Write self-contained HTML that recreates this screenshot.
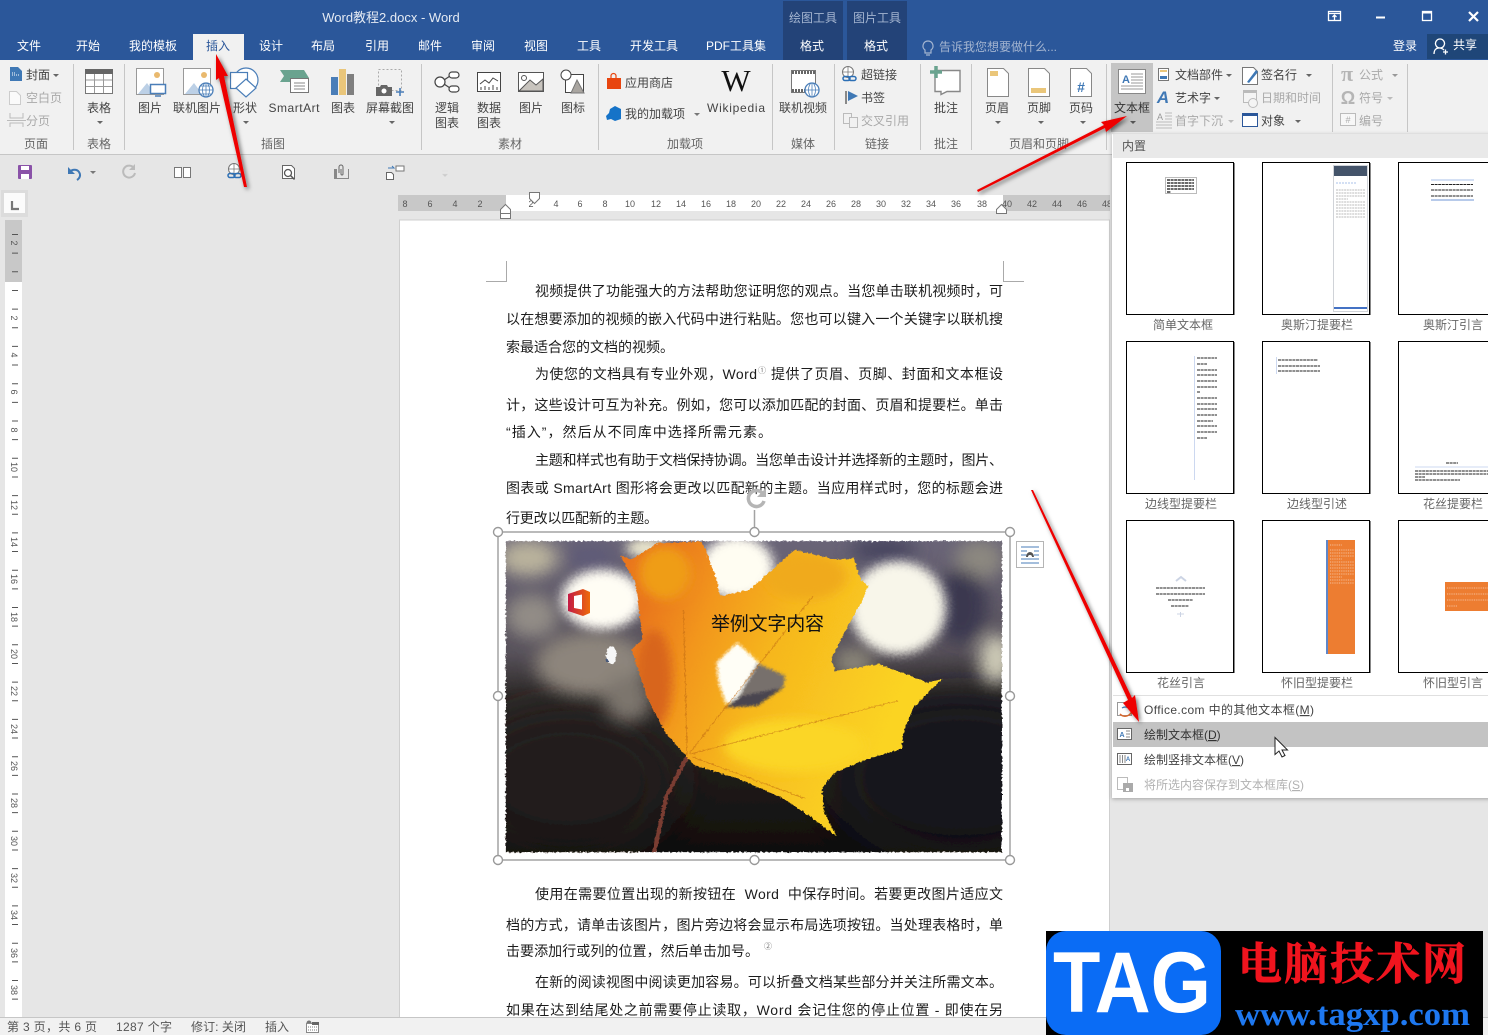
<!DOCTYPE html>
<html lang="zh-CN">
<head>
<meta charset="utf-8">
<title>Word教程2.docx - Word</title>
<style>
html,body{margin:0;padding:0;background:#e6e6e6;width:1488px;height:1035px;overflow:hidden}
svg{display:block;position:absolute;left:0;top:0}
text{font-family:"Liberation Sans","Noto Sans CJK SC",sans-serif;font-size:12px;fill:#444;white-space:pre}
.c{text-anchor:middle}
.tab{fill:#fff;text-anchor:middle}
.g{fill:#a9a9a9}
.doc{font-size:14px;fill:#1c1c1c}
.r{font-size:9px;fill:#555;text-anchor:middle}
.lab{fill:#666;text-anchor:middle}
.gr{fill:#666;text-anchor:middle}
.s{fill:#555}
.th{fill:#fff;stroke:#000;stroke-width:1}
</style>
</head>
<body>
<svg width="1488" height="1035" viewBox="0 0 1488 1035" xmlns="http://www.w3.org/2000/svg">
<defs>
<filter id="b0" x="-100%" y="-100%" width="300%" height="300%"><feGaussianBlur stdDeviation="70"/></filter>
<filter id="b1" x="-60%" y="-60%" width="220%" height="220%"><feGaussianBlur stdDeviation="24"/></filter>
<filter id="b2" x="-50%" y="-50%" width="200%" height="200%"><feGaussianBlur stdDeviation="15"/></filter>
<filter id="b3" x="-30%" y="-30%" width="160%" height="160%"><feGaussianBlur stdDeviation="4"/></filter>
<filter id="paint" x="-5%" y="-5%" width="110%" height="110%"><feTurbulence type="fractalNoise" baseFrequency="0.14" numOctaves="2" seed="4"/><feDisplacementMap in="SourceGraphic" scale="10" xChannelSelector="R" yChannelSelector="G"/></filter>
<filter id="sh" x="-30%" y="-30%" width="160%" height="160%"><feDropShadow dx="2" dy="2" stdDeviation="2" flood-color="#000" flood-opacity=".55"/></filter>
<filter id="mshadow" x="-5%" y="-5%" width="110%" height="110%"><feDropShadow dx="0" dy="1" stdDeviation="2" flood-color="#000" flood-opacity=".3"/></filter>
<linearGradient id="leaf" gradientUnits="userSpaceOnUse" x1="400" y1="500" x2="1100" y2="760"><stop offset="0" stop-color="#e9761f"/><stop offset=".22" stop-color="#f2961c"/><stop offset=".5" stop-color="#f6b71d"/><stop offset="1" stop-color="#fbd424"/></linearGradient>
<linearGradient id="bgd" x1="0" y1="0" x2="0" y2="1"><stop offset="0" stop-color="#6a6578"/><stop offset=".36" stop-color="#57515a"/><stop offset=".5" stop-color="#2e2a28"/><stop offset="1" stop-color="#0f0d0b"/></linearGradient>
<linearGradient id="off" x1="0" y1="0" x2="1" y2="0"><stop offset="0" stop-color="#c21a45"/><stop offset="1" stop-color="#ee6a0a"/></linearGradient>
</defs>

<!-- title bar -->
<rect width="1488" height="60" fill="#2b579a"/>
<text x="391" y="22" class="c" style="font-size:13px;fill:#e4eaf3">Word教程2.docx - Word</text>
<rect x="783" y="1" width="60" height="59" fill="#234378"/>
<rect x="847" y="1" width="60" height="59" fill="#234378"/>
<text x="813" y="22" class="c" style="fill:#a4b5d0">绘图工具</text>
<text x="877" y="22" class="c" style="fill:#a4b5d0">图片工具</text>
<rect x="193" y="34" width="51" height="26" fill="#f1f1f1"/>
<g>
<text x="29" y="50" class="tab">文件</text>
<text x="88" y="50" class="tab">开始</text>
<text x="153" y="50" class="tab">我的模板</text>
<text x="218" y="50" class="c" style="fill:#2b579a">插入</text>
<text x="271" y="50" class="tab">设计</text>
<text x="323" y="50" class="tab">布局</text>
<text x="377" y="50" class="tab">引用</text>
<text x="430" y="50" class="tab">邮件</text>
<text x="483" y="50" class="tab">审阅</text>
<text x="536" y="50" class="tab">视图</text>
<text x="589" y="50" class="tab">工具</text>
<text x="654" y="50" class="tab">开发工具</text>
<text x="736" y="50" class="tab" textLength="60">PDF工具集</text>
<text x="812" y="50" class="tab">格式</text>
<text x="876" y="50" class="tab">格式</text>
</g>
<path d="M928 41a5 5 0 0 1 3 9v3h-6v-3a5 5 0 0 1 3-9zM926 55h4" fill="none" stroke="#a4b5d0" stroke-width="1.2"/>
<text x="939" y="51" style="fill:#a4b5d0">告诉我您想要做什么...</text>
<text x="1405" y="50" class="tab">登录</text>
<rect x="1427" y="34" width="61" height="25" fill="#1f4678"/>
<path d="M1440 39a4.5 4.5 0 1 1-.01 0zM1434 54c0-4 2-6 5-6s4 1 5 2M1443 52h5M1445.500 49.500v5" fill="none" stroke="#fff" stroke-width="1.300"/>
<text x="1465" y="49" class="tab">共享</text>
<g fill="none" stroke="#fff" stroke-width="1.300">
<rect x="1328.500" y="11.500" width="12" height="9"/><path d="M1329 13.500h11M1334.500 20v-5M1332.500 17l2-2 2 2"/>
<path d="M1376 17.500h9" stroke-width="2"/>
<rect x="1422.500" y="11.500" width="9" height="9"/><path d="M1422 12.500h10" stroke-width="2"/>
<path d="M1469 12l9 9M1478 12l-9 9" stroke-width="2.200"/>
</g>

<!-- ribbon -->
<rect y="60" width="1488" height="94" fill="#f1f1f1"/>
<rect y="154" width="1488" height="1" fill="#c6c6c6"/>
<g stroke="#c6c6c6" stroke-width="1">
<path d="M73.500 64v86M124.500 64v86M421.500 64v86M598.500 64v86M772.500 64v86M834.500 64v86M920.500 64v86M971.500 64v86M1106.500 64v86M1332.500 64v68M1407.500 64v68"/>
</g>
<g>
<text x="36" y="148" class="gr">页面</text><text x="99" y="148" class="gr">表格</text><text x="273" y="148" class="gr">插图</text><text x="510" y="148" class="gr">素材</text><text x="685" y="148" class="gr">加载项</text><text x="803" y="148" class="gr">媒体</text><text x="877" y="148" class="gr">链接</text><text x="946" y="148" class="gr">批注</text><text x="1039" y="148" class="gr">页眉和页脚</text>
</g>
<!-- page group -->
<path d="M10 67h8l4 4v10H10z" fill="#3f78b5"/><path d="M12 75h8M12 73h4" stroke="#fff" stroke-dasharray="1 1"/>
<text x="26" y="79">封面</text><path d="M53 74h6l-3 3z" fill="#666"/>
<path d="M9.500 91.500h7l4 4v9h-11z" fill="#fafafa" stroke="#ccc"/>
<text x="26" y="102" class="g">空白页</text>
<path d="M10 113v5h13v-5M10 127v-4h13v4M7 120.500h19" fill="none" stroke="#bbb"/>
<text x="26" y="125" class="g">分页</text>
<!-- table -->
<rect x="85.500" y="69.500" width="27" height="24" fill="#fff" stroke="#777"/><rect x="85" y="69" width="28" height="5" fill="#666"/>
<path d="M86 80h26M86 86.500h26M94.500 74v19M103.500 74v19" stroke="#999"/>
<text x="99" y="112" class="c">表格</text><path d="M97 121h6l-3 3z" fill="#666"/>
<!-- picture -->
<rect x="136.500" y="68.500" width="27" height="26" fill="#fff" stroke="#999"/><circle cx="157" cy="75" r="3" fill="#e9b96e"/><path d="M138 94l9-11 8 11z" fill="#bcd0e6"/>
<rect x="150.500" y="84.500" width="15" height="9" fill="#fff" stroke="#4a7eb8" stroke-width="1.500"/><path d="M155 96h6" stroke="#4a7eb8" stroke-width="1.500"/>
<text x="150" y="112" class="c">图片</text>
<rect x="183.500" y="68.500" width="27" height="26" fill="#fff" stroke="#999"/><circle cx="204" cy="75" r="3" fill="#e9b96e"/><path d="M185 94l9-11 8 11z" fill="#bcd0e6"/>
<circle cx="206" cy="90" r="7" fill="#fff" stroke="#4a7eb8" stroke-width="1.300"/><path d="M199 90h14M206 83v14M201 86h10M201 94h10" stroke="#4a7eb8" stroke-width=".8"/><ellipse cx="206" cy="90" rx="3.500" ry="7" fill="none" stroke="#4a7eb8" stroke-width=".8"/>
<text x="197" y="112" class="c">联机图片</text>
<!-- shapes -->
<circle cx="246" cy="80" r="12" fill="#fff" stroke="#4a7eb8" stroke-width="1.200"/><rect x="230.500" y="72.500" width="17" height="16" fill="#fff" stroke="#4a7eb8" stroke-width="1.200"/><path d="M246 79l10 9-10 9-10-9z" fill="#fff" stroke="#4a7eb8" stroke-width="1.200"/>
<text x="245" y="112" class="c">形状</text><path d="M243 121h6l-3 3z" fill="#666"/>
<path d="M280 70h24l5 8h-13v4h-16l4-6z" fill="#6aa38f"/><rect x="290.500" y="78.500" width="18" height="14" fill="#fff" stroke="#777"/><path d="M294 83h11M294 86h11M294 89h11" stroke="#888"/>
<text x="294" y="112" class="c" textLength="51">SmartArt</text>
<rect x="331" y="77" width="7" height="18" fill="#4a7eb8"/><rect x="339" y="69" width="7" height="26" fill="#eac67a"/><rect x="347" y="74" width="7" height="21" fill="#7f7f7f"/>
<text x="343" y="112" class="c">图表</text>
<rect x="378.500" y="69.500" width="23" height="21" fill="none" stroke="#aaa" stroke-dasharray="2 2"/><path d="M376 87h4l1-2h6l1 2h4v9h-16z" fill="#666"/><circle cx="384" cy="91" r="2.500" fill="#fff"/><path d="M396 92h8M400 88v8" stroke="#4a7eb8" stroke-width="1.600"/>
<text x="390" y="112" class="c">屏幕截图</text><path d="M389 121h6l-3 3z" fill="#666"/>
<!-- material -->
<g fill="#fff" stroke="#444" stroke-width="1.200"><path d="M444 80l6-4M444 84l6 4" fill="none"/><circle cx="440" cy="82" r="5"/><rect x="449" y="72" width="10" height="6" rx="3"/><rect x="449" y="86" width="10" height="6" rx="3"/></g>
<text x="447" y="112" class="c">逻辑</text><text x="447" y="127" class="c">图表</text>
<rect x="477.500" y="72.500" width="23" height="19" fill="#fff" stroke="#444"/><path d="M480 84l5-4 4 3 4-5 5 3M481 90v-3M485 90v-4M489 90v-3M493 90v-5M497 90v-3" fill="none" stroke="#444"/>
<text x="489" y="112" class="c">数据</text><text x="489" y="127" class="c">图表</text>
<rect x="518.500" y="72.500" width="25" height="19" fill="#fff" stroke="#555"/><path d="M519 91l11-11 6 5 7-6v12z" fill="#c8c4be" stroke="#555"/><circle cx="524" cy="78" r="2.500" fill="#fff" stroke="#555"/>
<text x="531" y="112" class="c">图片</text>
<rect x="565.500" y="74.500" width="18" height="18" fill="#fff" stroke="#444"/><circle cx="566" cy="75" r="5" fill="#fff" stroke="#444"/><path d="M577 80l7 13h-13z" fill="#a9a5a0" stroke="#777"/>
<text x="573" y="112" class="c">图标</text>
<!-- addins -->
<path d="M607 78h14v11h-14z" fill="#e8450f"/><path d="M611 78v-2a2.500 2.500 0 0 1 5 0v2" fill="none" stroke="#e8450f" stroke-width="1.200"/>
<text x="625" y="87">应用商店</text>
<path d="M610 109l5-3 6 3v10l-6 2-4-2-4 1-1-4 3-3z" fill="#1573c8"/>
<text x="625" y="118">我的加载项</text><path d="M694 113h6l-3 3z" fill="#777"/>
<text x="736" y="91" class="c" style="font-family:'Liberation Serif',serif;font-size:31px;fill:#111">W</text>
<text x="736" y="112" class="c" textLength="58">Wikipedia</text>
<rect x="791.500" y="70.500" width="24" height="22" fill="#fff" stroke="#777"/><path d="M792 72.500h23M792 90.500h23" stroke="#666" stroke-width="3" stroke-dasharray="2 1"/>
<circle cx="812" cy="90" r="7" fill="#fff" stroke="#4a7eb8" stroke-width="1.300"/><path d="M805 90h14M812 83v14" stroke="#4a7eb8" stroke-width=".8"/><ellipse cx="812" cy="90" rx="3.500" ry="7" fill="none" stroke="#4a7eb8" stroke-width=".8"/>
<text x="803" y="112" class="c">联机视频</text>
<circle cx="848" cy="72" r="5.500" fill="#fff" stroke="#777"/><path d="M843 72h10M848 67v10" stroke="#777" stroke-width=".8"/><rect x="843" y="76.500" width="7" height="4" rx="2" fill="none" stroke="#2c6fb5" stroke-width="1.500"/><rect x="849" y="76.500" width="7" height="4" rx="2" fill="none" stroke="#2c6fb5" stroke-width="1.500"/>
<text x="861" y="79">超链接</text>
<path d="M846 91v13" stroke="#666" stroke-width="1.500"/><path d="M848 91l10 5-10 5z" fill="#3f78b5"/>
<text x="861" y="102">书签</text>
<rect x="843.500" y="113.500" width="8" height="10" fill="none" stroke="#bbb"/><rect x="849.500" y="117.500" width="8" height="10" fill="#f1f1f1" stroke="#bbb"/>
<text x="861" y="125" class="g">交叉引用</text>
<!-- comment -->
<path d="M935 70.500h25v21h-13l-6 3v-3h-6z" fill="#fff" stroke="#888" stroke-width="1.400"/><path d="M930 72h12M936 66v12" stroke="#6aa38f" stroke-width="3.500"/>
<text x="946" y="112" class="c">批注</text>
<!-- header footer -->
<path d="M987.500 68.500h16l5 5v23h-21z" fill="#fff" stroke="#888"/><rect x="990" y="71" width="8" height="5" fill="#eac67a"/>
<text x="997" y="112" class="c">页眉</text><path d="M995 121h6l-3 3z" fill="#666"/>
<path d="M1028.500 68.500h16l5 5v23h-21z" fill="#fff" stroke="#888"/><rect x="1031" y="88" width="15" height="5" fill="#eac67a"/>
<text x="1039" y="112" class="c">页脚</text><path d="M1038 121h6l-3 3z" fill="#666"/>
<path d="M1070.500 68.500h16l5 5v23h-21z" fill="#fff" stroke="#888"/><text x="1081" y="92" class="c" style="font-size:14px;font-weight:bold;fill:#3f78b5">#</text>
<text x="1081" y="112" class="c">页码</text><path d="M1080 121h6l-3 3z" fill="#666"/>
<!-- textbox button -->
<rect x="1111" y="63" width="42" height="69" fill="#c5c5c5"/>
<rect x="1118.500" y="69.500" width="27" height="24" fill="#fff" stroke="#888"/><text x="1126" y="83" class="c" style="font-size:11px;font-weight:bold;fill:#3f78b5">A</text><path d="M1131 74h12M1131 77h12M1131 80h12M1131 83h12M1121 86h22M1121 89h22" stroke="#999"/>
<text x="1132" y="112" class="c" style="fill:#333">文本框</text><path d="M1130 121h6l-3 3z" fill="#555"/>
<!-- text group -->
<rect x="1158.500" y="68.500" width="10" height="12" fill="#fff" stroke="#777"/><rect x="1160" y="70" width="7" height="2" fill="#eac67a"/><rect x="1160" y="76" width="7" height="3" fill="#3f78b5"/>
<text x="1175" y="79">文档部件</text><path d="M1226 74h6l-3 3z" fill="#666"/>
<text x="1163" y="103" class="c" style="font-size:17px;font-weight:bold;font-style:italic;fill:#3f78b5">A</text>
<text x="1175" y="102">艺术字</text><path d="M1214 97h6l-3 3z" fill="#666"/>
<text x="1160" y="120" class="c" style="font-size:9px;fill:#999">A</text><path d="M1165 113h7M1165 116h7M1165 119h7M1156 122h16M1156 125h16M1156 128h16" stroke="#bbb"/>
<text x="1175" y="125" class="g">首字下沉</text><path d="M1228 120h6l-3 3z" fill="#bbb"/>
<path d="M1242.500 67.500h11l4 4v13h-15z" fill="#fff" stroke="#777"/><path d="M1247 82l9-12 2 2-9 11z" fill="#3f78b5"/>
<text x="1261" y="79">签名行</text><path d="M1306 74h6l-3 3z" fill="#666"/>
<rect x="1243.500" y="91.500" width="13" height="11" fill="#f4f4f4" stroke="#bbb"/><rect x="1243" y="90" width="14" height="3" fill="#bbb"/><circle cx="1253" cy="103" r="4.500" fill="#f4f4f4" stroke="#bbb"/>
<text x="1261" y="102" class="g">日期和时间</text>
<rect x="1242.500" y="113.500" width="15" height="13" fill="#fff" stroke="#2b579a"/><rect x="1242" y="113" width="16" height="3" fill="#2b579a"/>
<text x="1261" y="125">对象</text><path d="M1295 120h6l-3 3z" fill="#666"/>
<text x="1347" y="81" class="c" style="font-family:'Liberation Serif',serif;font-size:22px;font-weight:bold;fill:#b5b5b5">π</text>
<text x="1359" y="79" class="g">公式</text><path d="M1392 74h6l-3 3z" fill="#999"/>
<text x="1348" y="104" class="c" style="font-size:18px;font-weight:bold;fill:#b5b5b5">Ω</text>
<text x="1359" y="102" class="g">符号</text><path d="M1387 97h6l-3 3z" fill="#bbb"/>
<rect x="1340.500" y="113.500" width="15" height="12" fill="#f7f7f7" stroke="#bbb"/><text x="1348" y="123" class="c" style="font-size:9px;fill:#aaa">#</text>
<text x="1359" y="125" class="g">编号</text>

<!-- quick toolbar -->
<rect x="18" y="165" width="14" height="14" rx="1" fill="#8a52a8"/><rect x="21" y="166" width="8" height="4" fill="#fff"/><rect x="21" y="174" width="8" height="5" fill="#fff"/>
<path d="M70 172c2-3 7-3 9 0s1 6-2 8" fill="none" stroke="#3f78b5" stroke-width="2"/><path d="M68 167v7h7z" fill="#3f78b5"/>
<path d="M90 171h6l-3 3z" fill="#777"/>
<path d="M134 168a6 6 0 1 0 1 5" fill="none" stroke="#bbb" stroke-width="2"/><path d="M135 164v6h-6z" fill="#bbb"/>
<rect x="174.500" y="167.500" width="7" height="10" fill="#fff" stroke="#777"/><rect x="183.500" y="167.500" width="7" height="10" fill="#fff" stroke="#777"/>
<circle cx="234" cy="169" r="5.500" fill="#fff" stroke="#777"/><path d="M229 169h10M234 164v10" stroke="#777" stroke-width=".8"/><rect x="228" y="173.500" width="7" height="4" rx="2" fill="none" stroke="#2c6fb5" stroke-width="1.500"/><rect x="234" y="173.500" width="7" height="4" rx="2" fill="none" stroke="#2c6fb5" stroke-width="1.500"/>
<path d="M282.500 165.500h9l3 3v10h-12z" fill="#fff" stroke="#666"/><circle cx="288" cy="173" r="3.500" fill="#fff" stroke="#555" stroke-width="1.300"/><path d="M290.500 175.500l4 4" stroke="#555" stroke-width="1.500"/>
<path d="M334 169h3v9h11v-9h1v10h-15z" fill="#888"/><path d="M339 173v-6a2 2 0 0 1 4 0v7a1 1 0 0 1-2 0v-5" fill="none" stroke="#666"/>
<rect x="396" y="166" width="8" height="5" fill="#fff" stroke="#777"/><path d="M386.500 172.500h5l2 2v5h-7z" fill="#fff" stroke="#666"/><path d="M388 168h6l-2-2" fill="none" stroke="#3f78b5"/>
<path d="M442 171h6M442 174h6l-3 3z" fill="#ccc" stroke="#ddd" stroke-width=".5"/>

<!-- rulers -->
<rect x="1" y="190" width="27" height="27" fill="#dcdcdc"/><rect x="4" y="193" width="21" height="20" fill="#fbfbfb"/><path d="M12 201v8h7" fill="none" stroke="#777" stroke-width="2.200"/>
<rect x="398" y="195" width="712" height="16" fill="#c8c8c8"/><rect x="506" y="195" width="497" height="16" fill="#fff"/>
<g>
<text x="405" y="207" class="r">8</text><text x="430" y="207" class="r">6</text><text x="455" y="207" class="r">4</text><text x="480" y="207" class="r">2</text>
<text x="531" y="207" class="r">2</text><text x="556" y="207" class="r">4</text><text x="580" y="207" class="r">6</text><text x="605" y="207" class="r">8</text><text x="630" y="207" class="r">10</text><text x="656" y="207" class="r">12</text><text x="681" y="207" class="r">14</text><text x="706" y="207" class="r">16</text><text x="731" y="207" class="r">18</text><text x="756" y="207" class="r">20</text><text x="781" y="207" class="r">22</text><text x="806" y="207" class="r">24</text><text x="831" y="207" class="r">26</text><text x="856" y="207" class="r">28</text><text x="881" y="207" class="r">30</text><text x="906" y="207" class="r">32</text><text x="931" y="207" class="r">34</text><text x="956" y="207" class="r">36</text><text x="982" y="207" class="r">38</text><text x="1007" y="207" class="r">40</text><text x="1032" y="207" class="r">42</text><text x="1057" y="207" class="r">44</text><text x="1082" y="207" class="r">46</text><text x="1107" y="207" class="r">48</text>
</g>
<path d="M529.500 192.500h10v6l-5 5-5-5z" fill="#fff" stroke="#777"/>
<path d="M500.500 213.500v-4l5-5 5 5v4z" fill="#fff" stroke="#777"/><rect x="500.500" y="213.500" width="10" height="5" fill="#fff" stroke="#777"/>
<path d="M996.500 213.500v-4l5-5 5 5v4z" fill="#fff" stroke="#777"/>
<rect x="5" y="220" width="17" height="798" fill="#fff"/><rect x="5" y="220" width="17" height="62" fill="#c8c8c8"/>
<path d="M15 234V1018" fill="none" stroke="#555" stroke-width="6" stroke-dasharray="1 17.65"/>
<g>
<text transform="translate(11 243) rotate(90)" class="r">2</text>
<text transform="translate(11 318) rotate(90)" class="r">2</text><text transform="translate(11 355) rotate(90)" class="r">4</text><text transform="translate(11 392) rotate(90)" class="r">6</text><text transform="translate(11 430) rotate(90)" class="r">8</text>
<text transform="translate(11 467) rotate(90)" class="r">10</text><text transform="translate(11 505) rotate(90)" class="r">12</text><text transform="translate(11 542) rotate(90)" class="r">14</text><text transform="translate(11 579) rotate(90)" class="r">16</text><text transform="translate(11 617) rotate(90)" class="r">18</text><text transform="translate(11 654) rotate(90)" class="r">20</text><text transform="translate(11 691) rotate(90)" class="r">22</text><text transform="translate(11 729) rotate(90)" class="r">24</text><text transform="translate(11 766) rotate(90)" class="r">26</text><text transform="translate(11 803) rotate(90)" class="r">28</text><text transform="translate(11 841) rotate(90)" class="r">30</text><text transform="translate(11 878) rotate(90)" class="r">32</text><text transform="translate(11 915) rotate(90)" class="r">34</text><text transform="translate(11 953) rotate(90)" class="r">36</text><text transform="translate(11 990) rotate(90)" class="r">38</text>
</g>

<!-- page -->
<rect x="399.500" y="220" width="710" height="800" fill="#fff" stroke="#cfcfcf"/>
<rect x="1110" y="155" width="378" height="880" fill="#e6e6e6"/>
<path d="M506.500 261v20.500H486M1003.500 261v20.500H1024" fill="none" stroke="#aaa"/>
<g>
<text x="535" y="296" class="doc" textLength="468">视频提供了功能强大的方法帮助您证明您的观点。当您单击联机视频时，可</text>
<text x="506" y="324" class="doc" textLength="497">以在想要添加的视频的嵌入代码中进行粘贴。您也可以键入一个关键字以联机搜</text>
<text x="506" y="352" class="doc" textLength="168">索最适合您的文档的视频。</text>
<text x="535" y="379" class="doc" textLength="222">为使您的文档具有专业外观，Word</text>
<text x="758" y="373" style="font-size:8px;fill:#777">①</text>
<text x="771" y="379" class="doc" textLength="232">提供了页眉、页脚、封面和文本框设</text>
<text x="506" y="410" class="doc" textLength="497">计，这些设计可互为补充。例如，您可以添加匹配的封面、页眉和提要栏。单击</text>
<text x="506" y="437" class="doc" textLength="266">“插入”，然后从不同库中选择所需元素。</text>
<text x="535" y="465" class="doc" textLength="468">主题和样式也有助于文档保持协调。当您单击设计并选择新的主题时，图片、</text>
<text x="506" y="493" class="doc" textLength="497">图表或 SmartArt 图形将会更改以匹配新的主题。当应用样式时，您的标题会进</text>
<text x="506" y="523" class="doc" textLength="152">行更改以匹配新的主题。</text>
<text x="535" y="899" class="doc" textLength="468">使用在需要位置出现的新按钮在  Word  中保存时间。若要更改图片适应文</text>
<text x="506" y="930" class="doc" textLength="497">档的方式，请单击该图片，图片旁边将会显示布局选项按钮。当处理表格时，单</text>
<text x="506" y="956" class="doc" textLength="253">击要添加行或列的位置，然后单击加号。</text>
<text x="764" y="949" style="font-size:8px;fill:#777">②</text>
<text x="535" y="987" class="doc" textLength="468">在新的阅读视图中阅读更加容易。可以折叠文档某些部分并关注所需文本。</text>
<text x="506" y="1015" class="doc" textLength="497">如果在达到结尾处之前需要停止读取，Word 会记住您的停止位置 - 即使在另</text>
</g>

<!-- picture -->
<clipPath id="pclip"><rect x="70" y="184" width="1341" height="937"/></clipPath>
<clipPath id="leafclip"><path d="M380 228L410 240 480 190 600 185 640 300 650 350 730 330 790 270 850 210 960 240 1010 235 1030 300 1050 320 1030 370 980 470 950 540 960 575 1080 555 1210 610 1250 600 1215 635 1170 690 1145 760 1140 810 1050 840 960 880 925 930 930 1000 965 1075 900 1020 820 960 700 900 580 860 560 835 500 760 450 650 410 510 440 480 420 310Z"/></clipPath>
<svg x="480" y="480" width="580" height="390" viewBox="0 0 1568 1175" preserveAspectRatio="none" overflow="visible">
<g filter="url(#paint)">
<g clip-path="url(#pclip)">
<rect x="60" y="175" width="1360" height="960" fill="url(#bgd)"/>
<ellipse cx="1300" cy="880" rx="340" ry="240" fill="#15131d" filter="url(#b0)"/>
<ellipse cx="240" cy="900" rx="280" ry="210" fill="#221e1a" filter="url(#b0)"/>
<g filter="url(#b1)">
<ellipse cx="130" cy="235" rx="80" ry="55" fill="#b9b29c"/>
<ellipse cx="300" cy="230" rx="70" ry="35" fill="#5f5a78"/>
<ellipse cx="1350" cy="240" rx="65" ry="60" fill="#8c8880"/>
<ellipse cx="1090" cy="210" rx="90" ry="40" fill="#4a4660"/>
<ellipse cx="1300" cy="380" rx="70" ry="110" fill="#3a3850"/>
<ellipse cx="1395" cy="540" rx="45" ry="75" fill="#cfccb8"/>
<ellipse cx="300" cy="555" rx="150" ry="95" fill="#8d857c"/>
<ellipse cx="400" cy="660" rx="65" ry="70" fill="#7b756d"/>
<ellipse cx="140" cy="410" rx="70" ry="65" fill="#928c86"/>
<ellipse cx="1010" cy="550" rx="55" ry="45" fill="#8a8578"/>
</g>
<g filter="url(#b2)">
<ellipse cx="330" cy="360" rx="110" ry="90" fill="#fffdf4"/>
<ellipse cx="695" cy="265" rx="100" ry="95" fill="#fffdf2"/>
<ellipse cx="1130" cy="385" rx="130" ry="140" fill="#f8f6ea"/>
<ellipse cx="450" cy="205" rx="55" ry="30" fill="#e8e4cc"/>
</g>
<path d="M560 835L505 950 470 1125" fill="none" stroke="#7a3c32" stroke-width="11"/>
<path d="M380 228L410 240 480 190 600 185 640 300 650 350 730 330 790 270 850 210 960 240 1010 235 1030 300 1050 320 1030 370 980 470 950 540 960 575 1080 555 1210 610 1250 600 1215 635 1170 690 1145 760 1140 810 1050 840 960 880 925 930 930 1000 965 1075 900 1020 820 960 700 900 580 860 560 835 500 760 450 650 410 510 440 480 420 310Z" fill="url(#leaf)"/>
<g clip-path="url(#leafclip)"><g filter="url(#b2)">
<ellipse cx="470" cy="600" rx="50" ry="150" fill="#d8651f"/>
<ellipse cx="500" cy="280" rx="70" ry="80" fill="#ef9d18"/>
<ellipse cx="880" cy="290" rx="110" ry="70" fill="#f0aa1c"/>
<ellipse cx="850" cy="800" rx="190" ry="80" fill="#fbd626"/>
</g></g>
<g filter="url(#b3)">
<path d="M695 490L745 540 760 560 700 660 665 675 645 610 640 550Z" fill="#fffef6"/>
<path d="M750 552L825 590 820 625 750 680 665 685 700 650Z" fill="#77706c"/>
<path d="M820 625L750 680 665 685 710 650Z" fill="#4a4450"/>
</g>
<path d="M560 830L550 390M565 825L900 350M570 825L1130 665M575 835L880 960" fill="none" stroke="#bf6a14" stroke-width="3" opacity=".55"/>
<ellipse cx="355" cy="528" rx="14" ry="26" fill="#f6f6f6"/><circle cx="342" cy="542" r="5" fill="#4a5a7a"/>
</g>
</g>
</svg>
<path d="M568 594L583 589 590 592V613L583 616 568 611Z" fill="url(#off)"/><path d="M574 596l8-1.500v15L574 608Z" fill="#fff"/>
<text x="711" y="630" textLength="113" style="font-size:19px;fill:#111">举例文字内容</text>

<!-- selection -->
<g fill="none" stroke="#a3a3a3" stroke-width="1.500">
<rect x="498" y="532" width="512" height="328"/>
<path d="M754.500 510v22"/>
<path d="M763 494a8 8 0 1 0 1 7" stroke-width="3.500" stroke="#b5b5b5"/>
</g>
<path d="M766 488v9h-9z" fill="#b5b5b5"/>
<g fill="#fff" stroke="#999" stroke-width="1.400">
<circle cx="498" cy="532" r="4.500"/><circle cx="754.500" cy="532" r="4.500"/><circle cx="1010" cy="532" r="4.500"/><circle cx="498" cy="696" r="4.500"/><circle cx="1010" cy="696" r="4.500"/><circle cx="498" cy="860" r="4.500"/><circle cx="754.500" cy="860" r="4.500"/><circle cx="1010" cy="860" r="4.500"/>
</g>
<rect x="1016.500" y="541.500" width="27" height="26" fill="#fff" stroke="#b5b5b5"/>
<path d="M1021 547h18M1021 551h6M1034 551h5M1021 555h6M1034 555h5M1021 559h18M1021 563h18" stroke="#4a7eb8"/>
<path d="M1026 557a4 5 0 0 1 8 0h-2a2 2 0 0 0-4 0z" fill="#555"/>

<!-- dropdown -->
<rect x="1112" y="134" width="380" height="664" fill="#fff" filter="url(#mshadow)"/>
<rect x="1113" y="134" width="375" height="24" fill="#e9e9e9"/>
<text x="1122" y="150" style="fill:#555">内置</text>
<g>
<rect class="th" x="1126.500" y="162.500" width="107" height="152"/><rect class="th" x="1262.500" y="162.500" width="107" height="152"/><rect class="th" x="1398.500" y="162.500" width="107" height="152"/>
<rect class="th" x="1126.500" y="341.500" width="107" height="152"/><rect class="th" x="1262.500" y="341.500" width="107" height="152"/><rect class="th" x="1398.500" y="341.500" width="107" height="152"/>
<rect class="th" x="1126.500" y="520.500" width="107" height="152"/><rect class="th" x="1262.500" y="520.500" width="107" height="152"/><rect class="th" x="1398.500" y="520.500" width="107" height="152"/>
<path d="M1234.500 163v152M1370.500 163v152M1234.500 342v152M1370.500 342v152M1234.500 521v152M1370.500 521v152" stroke="#888"/>
</g>
<g>
<!-- t1 -->
<rect x="1165.500" y="177.500" width="31" height="16" fill="#fff" stroke="#bbb"/><path d="M1167 180h27M1167 183h27M1167 186h27M1167 189h27M1167 192h4" stroke="#111" stroke-width="1.300" stroke-dasharray="3 .6"/>
<!-- t2 -->
<rect x="1333.500" y="165.500" width="34" height="146" fill="#fff" stroke="#d0d3d8"/><rect x="1334" y="166" width="33" height="10" fill="#44546a"/><rect x="1334" y="307" width="33" height="2" fill="#4472c4"/>
<path d="M1336 183h20" stroke="#a9c0e8" stroke-dasharray="2 1"/><path d="M1336 190h29M1336 193h29M1336 196h29M1336 199h12M1336 202h29M1336 205h29M1336 208h29M1336 211h29M1336 214h29M1336 217h29" stroke="#bbb" stroke-dasharray="2 .7"/>
<!-- t3 -->
<path d="M1431 180h43" stroke="#a9c0e8"/><path d="M1431 200h43" stroke="#6f94d6"/><path d="M1431 184.500h42M1431 190h42M1431 196h42" stroke="#222" stroke-dasharray="3 .6"/>
<!-- t4 -->
<path d="M1194.500 356v124" stroke="#ccd8f0"/><path d="M1197 358h20M1197 364h10M1197 370h20M1197 375h20M1197 381h20M1197 387h20M1197 392h3M1197 398h20M1197 404h20M1197 409h20M1197 415h20M1197 421h16M1197 426h20M1197 432h20M1197 438h10" stroke="#222" stroke-dasharray="3 .6"/>
<!-- t5 -->
<path d="M1276.500 357v17" stroke="#ccd8f0"/><path d="M1278 360h40M1278 366h42M1278 371h42" stroke="#222" stroke-dasharray="3 .6"/>
<!-- t6 -->
<path d="M1446 463h12" stroke="#222" stroke-dasharray="3 .6"/><path d="M1415 467h73" stroke="#ccd8f0"/><path d="M1415 471h73M1415 474h73M1415 477h10M1415 480h45" stroke="#222" stroke-dasharray="3 .6"/>
<!-- t7 -->
<path d="M1176 581l5-4 5 4" fill="none" stroke="#ccd4e4" stroke-width="2"/><path d="M1156 588h49M1156 594h49M1168 600h25M1171 606h18" stroke="#222" stroke-dasharray="3 .6"/><path d="M1177 614h7M1180.500 612v5" stroke="#ccd4e4"/>
<!-- t8 -->
<rect x="1326" y="540" width="29" height="114" fill="#ed7d31"/><rect x="1326" y="540" width="2" height="114" fill="#5f86c8"/><path d="M1330 545h12M1330 550h24M1330 553h24M1330 556h24M1330 559h12M1330 562h24M1330 565h24M1330 568h24M1330 571h24M1330 574h24M1330 577h12M1330 580h24M1330 583h24" stroke="#f8d2b8" stroke-width=".7" stroke-dasharray="1 .8"/>
<!-- t9 -->
<rect x="1445" y="582" width="43" height="29" fill="#ed7d31"/><path d="M1447 588h41M1447 594h41M1447 600h41M1447 606h10" stroke="#f8d2b8" stroke-width=".7" stroke-dasharray="1 .8"/>
</g>
<g>
<text x="1183" y="329" class="lab">简单文本框</text><text x="1317" y="329" class="lab">奥斯汀提要栏</text><text x="1453" y="329" class="lab">奥斯汀引言</text>
<text x="1181" y="508" class="lab">边线型提要栏</text><text x="1317" y="508" class="lab">边线型引述</text><text x="1453" y="508" class="lab">花丝提要栏</text>
<text x="1181" y="687" class="lab">花丝引言</text><text x="1317" y="687" class="lab">怀旧型提要栏</text><text x="1453" y="687" class="lab">怀旧型引言</text>
</g>
<path d="M1113 695.500H1488" stroke="#e0e0e0"/>
<rect x="1113" y="722" width="375" height="25" fill="#c3c3c3"/>
<rect x="1117.500" y="702.500" width="14" height="13" fill="#fff" stroke="#999"/><path d="M1120 714a7 7 0 0 0 12-4" fill="none" stroke="#d9662a" stroke-width="1.500"/><path d="M1122 708a6 5 0 0 1 9 2" fill="none" stroke="#3f78b5" stroke-width="1.300"/>
<text x="1144" y="714" textLength="170">Office.com 中的其他文本框(<tspan text-decoration="underline">M</tspan>)</text>
<rect x="1117.500" y="728.500" width="14" height="11" fill="#fff" stroke="#666"/><text x="1122" y="737" class="c" style="font-size:7px;font-weight:bold;fill:#3f78b5">A</text><path d="M1126 731h4M1126 734h4M1126 737h4" stroke="#888"/>
<text x="1144" y="739" style="fill:#333">绘制文本框(<tspan text-decoration="underline">D</tspan>)</text>
<rect x="1117.500" y="753.500" width="14" height="11" fill="#fff" stroke="#666"/><path d="M1120 755v8M1122.500 755v8M1125 755v8" stroke="#888"/><text x="1128" y="761" class="c" style="font-size:6px;font-weight:bold;fill:#3f78b5">A</text>
<text x="1144" y="764">绘制竖排文本框(<tspan text-decoration="underline">V</tspan>)</text>
<rect x="1117.500" y="777.500" width="10" height="12" fill="#fff" stroke="#bbb"/><rect x="1123" y="783" width="10" height="9" fill="#aaa"/><rect x="1126" y="788" width="3" height="3" fill="#fff"/>
<text x="1144" y="789" style="fill:#b2b2b2">将所选内容保存到文本框库(<tspan text-decoration="underline">S</tspan>)</text>
<path d="M1275 737.500v17l4-3.500 3 6 3-1.500-3-5.500h5.500z" fill="#fff" stroke="#222"/>

<!-- status bar -->
<rect y="1018" width="1488" height="17" fill="#f1f1f1"/><rect y="1017" width="1488" height="1" fill="#c6c6c6"/>
<text x="7" y="1031" class="s" textLength="90">第 3 页，共 6 页</text>
<text x="116" y="1031" class="s" textLength="56">1287 个字</text>
<text x="191" y="1031" class="s" textLength="55">修订: 关闭</text>
<text x="265" y="1031" class="s">插入</text>
<circle cx="309" cy="1023" r="2.500" fill="#777"/><rect x="306.500" y="1023.500" width="12" height="9" fill="#fff" stroke="#888"/><rect x="312" y="1022" width="7" height="3" fill="#666"/><path d="M308 1027h9M308 1030h9" stroke="#777" stroke-dasharray="1 1"/>

<!-- red arrows -->
<g fill="#ee0000" filter="url(#sh)">
<path d="M216 54L228 76 224 76 247 187 244 187 219 78 216 80Z"/>
<path d="M1127 116L1101 122 1104 125 977 190 978 192 1105 128 1106 132Z"/>
<path d="M1139 722L1123 703 1128 700 1031 490 1033 490 1132 698 1135 695Z"/>
</g>

<!-- watermark -->
<rect x="1046" y="931" width="437" height="104" fill="#000"/>
<rect x="1046" y="931" width="175" height="104" rx="20" fill="#0a6cf5"/>
<text x="1132" y="1012" class="c" textLength="158" lengthAdjust="spacingAndGlyphs" style="font-size:86px;font-weight:bold;fill:#fff">TAG</text>
<text x="1238" y="979" textLength="228" style="font-family:'Noto Serif CJK SC','Noto Sans CJK SC',sans-serif;font-size:44px;font-weight:bold;fill:#f0141e;stroke:#f0141e;stroke-width:.7">电脑技术网</text>
<text x="1235" y="1025" textLength="235" lengthAdjust="spacingAndGlyphs" style="font-family:'Liberation Serif',serif;font-size:33px;font-weight:bold;fill:#1e78f0">www.tagxp.com</text>
</svg>
</body>
</html>
